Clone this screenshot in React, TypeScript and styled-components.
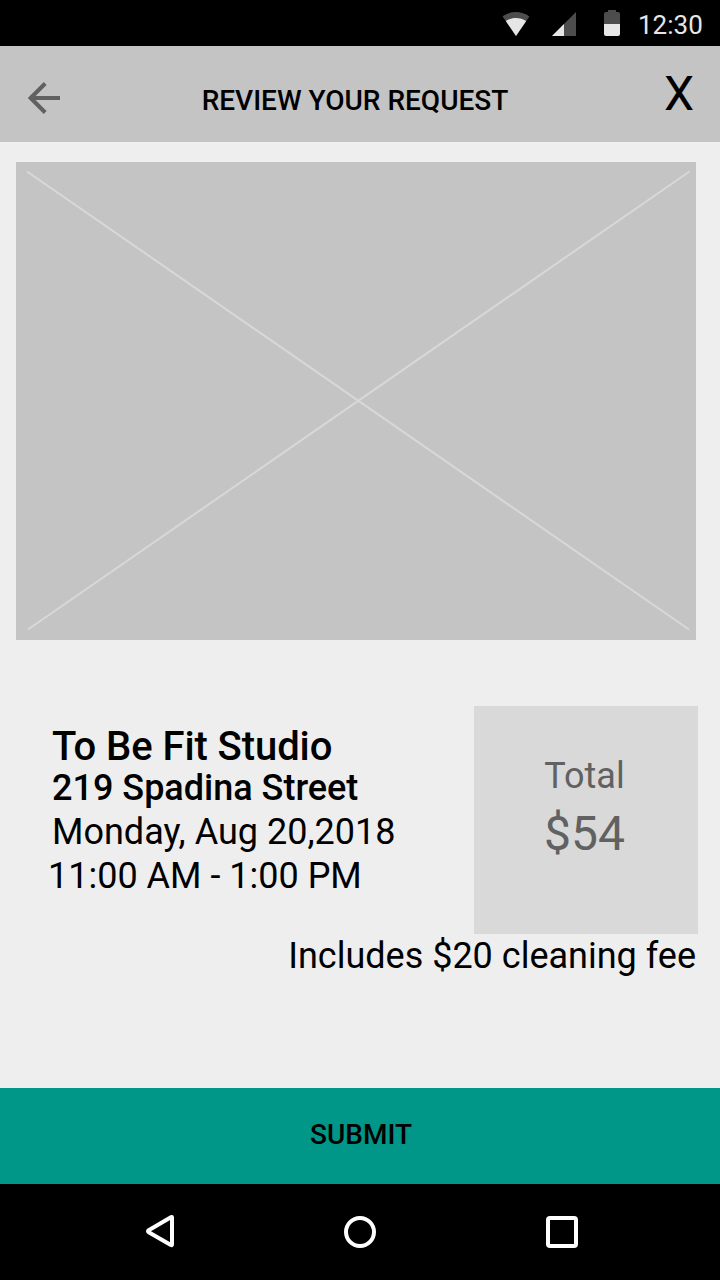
import React from "react";
import styled, { createGlobalStyle } from "styled-components";

const GlobalStyle = createGlobalStyle`
  *, *::before, *::after { box-sizing: border-box; }
  body { margin: 0; background: #eeeeee; font-family: Roboto, "Liberation Sans", sans-serif; }
  button { border: 0; padding: 0; background: none; font: inherit; color: inherit; }
  svg { display: block; }
`;

const Screen = styled.div`
  display: flex;
  flex-direction: column;
  width: 720px;
  height: 1280px;
  overflow: hidden;
  background: #eeeeee;
  color: #000;
`;

const StatusBar = styled.header`
  display: flex;
  align-items: flex-start;
  justify-content: flex-end;
  flex: none;
  height: 46px;
  padding-right: 17px;
  background: #000;
`;

const StatusIcons = styled.svg`
  width: 136px;
  height: 46px;
`;

const Clock = styled.time`
  width: 71px;
  padding: 9px 0 0 6px;
  font-size: 26px;
  line-height: 32px;
  color: #e6e6e6;
`;

const AppBar = styled.div`
  display: grid;
  grid-template-columns: 60px 1fr 60px;
  flex: none;
  height: 96px;
  padding: 24px 12px 0 0;
  background: #c4c4c4;
`;

const BackButton = styled.button`
  justify-self: end;
  align-self: start;
  padding-top: 12px;
`;

const BarTitle = styled.h1`
  margin: 0;
  padding: 15px 0 0 2px;
  font-size: 28px;
  font-weight: 500;
  line-height: 32px;
  text-align: center;
  white-space: nowrap;
`;

const CloseButton = styled.button`
  && {
    align-self: start;
    font-size: 48px;
    line-height: 48px;
    text-align: right;
    padding-right: 14px;
  }
`;

const Content = styled.main`
  display: flex;
  flex-direction: column;
  flex: 1;
  padding: 20px 22px 0 16px;
`;

const Photo = styled.div`
  width: 680px;
  height: 478px;
  background: #c4c4c4;
`;

const Booking = styled.section`
  display: flex;
  justify-content: space-between;
  margin-top: 66px;
`;

const Details = styled.div`
  display: flex;
  flex-direction: column;
  padding: 20px 0 0 36px;
  white-space: nowrap;
`;

const Venue = styled.h2`
  height: 40px;
  margin: 0;
  font-size: 40px;
  font-weight: 500;
  line-height: 42px;
  letter-spacing: -0.08px;
`;

const DetailLine = styled.p<{ $strong?: boolean; $outdent?: number }>`
  margin: 0 0 0 -${({ $outdent = 0 }) => $outdent}px;
  font-size: 36px;
  font-weight: ${({ $strong }) => ($strong ? 500 : 400)};
  line-height: 44px;
`;

const TotalCard = styled.div`
  display: flex;
  flex-direction: column;
  align-items: center;
  width: 224px;
  height: 228px;
  padding-top: 48px;
  background: #d9d9d9;
  color: #616161;
`;

const TotalLabel = styled.span`
  padding-right: 3px;
  font-size: 36px;
  line-height: 44px;
`;

const TotalAmount = styled.span`
  padding-right: 3px;
  font-size: 48px;
  line-height: 72px;
`;

const FeeNote = styled.p`
  margin: 0;
  padding-right: 2px;
  font-size: 36px;
  line-height: 44px;
  text-align: right;
`;

const SubmitButton = styled.button`
  && {
    flex: none;
    height: 96px;
    padding: 0 0 2px 2px;
    background: #009788;
    font-size: 28px;
    font-weight: 500;
    line-height: 32px;
  }
`;

const NavBar = styled.nav`
  display: grid;
  grid-template-columns: repeat(3, 202px);
  justify-content: center;
  align-items: center;
  justify-items: center;
  flex: none;
  height: 96px;
  background: #000;
`;

export default function App() {
  return (
    <Screen>
      <GlobalStyle />
      <StatusBar>
        <StatusIcons viewBox="496 0 136 46" aria-hidden="true">
          <path d="M502.600 16.500C510.500 10.500 521.500 10.500 529.400 16.500L516 36Z" fill="#4d4d4d" />
          <path d="M505.800 21C512 17 520 17 526.200 21L516 36Z" fill="#e6e6e6" />
          <path d="M576 12V36H552Z" fill="#4d4d4d" />
          <path d="M564 24V36H552Z" fill="#e6e6e6" />
          <path d="M608 12V10H616V12H618A2 2 0 0 1 620 14V24H604V14A2 2 0 0 1 606 12Z" fill="#4d4d4d" />
          <path d="M604 24H620V34A2 2 0 0 1 618 36H606A2 2 0 0 1 604 34Z" fill="#e6e6e6" />
        </StatusIcons>
        <Clock>12:30</Clock>
      </StatusBar>
      <AppBar>
        <BackButton aria-label="Back">
          <svg width="32" height="32" viewBox="0 0 32 32" fill="none" stroke="#616161" strokeWidth="4">
            <path d="M32 16H3M17.200 1.500L2.700 16L17.200 30.500" />
          </svg>
        </BackButton>
        <BarTitle>REVIEW YOUR REQUEST</BarTitle>
        <CloseButton aria-label="Close">X</CloseButton>
      </AppBar>
      <Content>
        <Photo>
          <svg width="680" height="478" viewBox="0 0 680 478" stroke="#d8d8d8" strokeWidth="2">
            <path d="M11 9.500L673 467.500M12 467.500L673.500 9.500" />
          </svg>
        </Photo>
        <Booking>
          <Details>
            <Venue>To Be Fit Studio</Venue>
            <DetailLine $strong>219 Spadina Street</DetailLine>
            <DetailLine>Monday, Aug 20,2018</DetailLine>
            <DetailLine $outdent={4}>11:00 AM - 1:00 PM</DetailLine>
          </Details>
          <TotalCard>
            <TotalLabel>Total</TotalLabel>
            <TotalAmount>$54</TotalAmount>
          </TotalCard>
        </Booking>
        <FeeNote>Includes $20 cleaning fee</FeeNote>
      </Content>
      <SubmitButton>SUBMIT</SubmitButton>
      <NavBar>
        <svg width="32" height="34" viewBox="-2 1 32 34" fill="none" stroke="#fff" strokeWidth="4" strokeLinejoin="round">
          <path d="M28 3.500V30.500Q28 31.600 26.900 31L4.700 18.200Q3.300 17.200 4.700 16.200L26.900 3.200Q28 2.600 28 3.500Z" />
        </svg>
        <svg width="32" height="32" viewBox="0 0 32 32" fill="none" stroke="#fff" strokeWidth="4">
          <circle cx="16" cy="16" r="14" />
        </svg>
        <svg width="32" height="32" viewBox="0 0 32 32" fill="none" stroke="#fff" strokeWidth="4">
          <rect x="2" y="2" width="28" height="28" rx="2" />
        </svg>
      </NavBar>
    </Screen>
  );
}
